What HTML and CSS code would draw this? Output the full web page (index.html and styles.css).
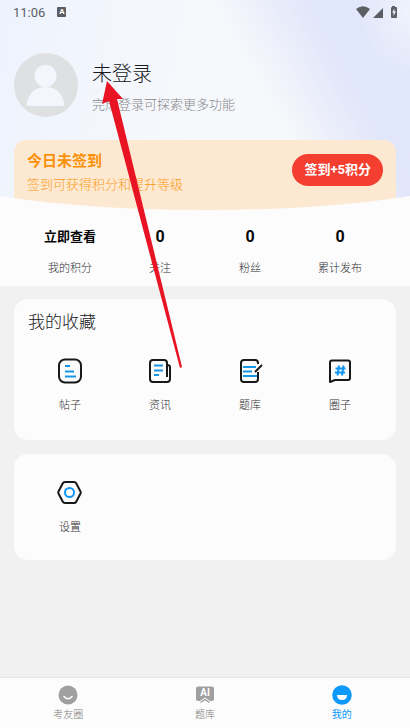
FILE: index.html
```html
<!DOCTYPE html>
<html lang="zh-CN">
<head>
<meta charset="utf-8">
<meta name="viewport" content="width=device-width, initial-scale=1">
<title>我的</title>
<link rel="stylesheet" href="styles.css">
</head>
<body>
<div class="app">
  <header class="hero">
    <div class="status">
      <span class="time">11:06</span>
      <span class="badge">A</span>
      <svg class="signals" width="42" height="14" viewBox="0 0 42 14" fill="#5c5e63" aria-hidden="true">
        <path d="M0 4Q7-1.500 14 4L7 13Z"/>
        <path d="M17 13L27 3V13Z"/>
        <path fill-rule="evenodd" d="M36 1h3v1h1q1 0 1 1v9q0 1-1 1h-4q-1 0-1-1V3q0-1 1-1ZM38.500 3.500L36 7.500h1.500V11L40 6.500h-1.500Z"/>
      </svg>
    </div>
    <a class="profile" href="#login">
      <svg class="avatar" width="64" height="64" viewBox="0 0 64 64" aria-hidden="true">
        <circle cx="32" cy="32" r="32" fill="#dfe0e1"/>
        <circle cx="31.500" cy="23" r="11" fill="#f3f6fd"/>
        <path d="M12.500 51Q13 53 15 53H48Q50 53 50.500 51C48 39 41 34 31.500 34S15 39 12.500 51Z" fill="#f3f6fd"/>
      </svg>
      <span class="who">
        <span class="name">未登录</span>
        <span class="hint">完成登录可探索更多功能</span>
      </span>
    </a>
    <section class="checkin">
      <div class="checkin-text">
        <h2>今日未签到</h2>
        <p>签到可获得积分和提升等级</p>
      </div>
      <button class="checkin-btn" type="button">签到+5积分</button>
    </section>
    <svg class="curve" viewBox="0 0 410 15" preserveAspectRatio="none" aria-hidden="true"><path d="M0 0C65 10 130 14 205 14S345 10 410 0V15H0Z" fill="#fcfcfc"/></svg>
  </header>

  <section class="stats">
    <a class="stat" href="#points"><b class="view">立即查看</b><span>我的积分</span></a>
    <a class="stat" href="#following"><b>0</b><span>关注</span></a>
    <a class="stat" href="#fans"><b>0</b><span>粉丝</span></a>
    <a class="stat" href="#posts"><b>0</b><span>累计发布</span></a>
  </section>

  <main class="cards">
    <section class="card">
      <h2 class="card-title">我的收藏</h2>
      <div class="grid">
        <a class="item" href="#threads">
          <svg width="26" height="26" viewBox="0 0 26 26" fill="none" stroke-width="2" aria-hidden="true">
            <rect x="2" y="1.500" width="22" height="23" rx="6" stroke="#17181a"/>
            <path d="M8 8h5M8 13.500h9M8 18.500h11" stroke="#1296e5"/>
          </svg>
          <span>帖子</span>
        </a>
        <a class="item" href="#news">
          <svg width="26" height="26" viewBox="0 0 26 26" fill="none" stroke-width="2" aria-hidden="true">
            <path d="M20 19V5Q20 2 17 2H6Q3 2 3 5V21Q3 24 6 24H20Q23 24 23 21V9Q23 7 20 7" stroke="#17181a"/>
            <path d="M7 7.500h9M7 12.500h9M7 17h5" stroke="#1296e5"/>
          </svg>
          <span>资讯</span>
        </a>
        <a class="item" href="#questions">
          <svg width="26" height="26" viewBox="0 0 26 26" fill="none" stroke-width="2" aria-hidden="true">
            <path d="M21 6V5Q21 2 18 2H7Q4 2 4 5V21Q4 24 7 24H18Q21 24 21 21V14" stroke="#17181a"/>
            <path d="M6 9h13M6 13.500h9M6 18h14" stroke="#1296e5"/>
            <path d="M18 14L25 7" stroke="#17181a"/>
          </svg>
          <span>题库</span>
        </a>
        <a class="item" href="#circles">
          <svg width="26" height="26" viewBox="0 0 26 26" fill="none" stroke-width="2" stroke-linejoin="round" aria-hidden="true">
            <path d="M5 2.500H21Q23 2.500 23 4.500V20Q23 22 21 22H8L3 24V4.500Q3 2.500 5 2.500Z" stroke="#17181a"/>
            <path d="M12 7.500L10.500 17.500M16.500 7.500L15 17.500M8.500 10.500H18.500M8 14.500H18" stroke="#1296f5"/>
          </svg>
          <span>圈子</span>
        </a>
      </div>
    </section>
    <section class="card card-short">
      <div class="grid">
        <a class="item" href="#settings">
          <svg width="26" height="26" viewBox="0 0 26 26" fill="none" stroke-width="2" stroke-linejoin="round" aria-hidden="true">
            <path d="M8 2H17Q18.500 2 19.200 3.300L23.500 11.500Q24 12.500 23.500 13.500L19.200 21.700Q18.500 23 17 23H8Q6.500 23 5.800 21.700L1.500 13.500Q1 12.500 1.500 11.500L5.800 3.300Q6.500 2 8 2Z" stroke="#17181a"/>
            <circle cx="12.500" cy="12.500" r="4.500" stroke="#1296f5"/>
          </svg>
          <span>设置</span>
        </a>
      </div>
    </section>
  </main>

  <nav class="tabs">
    <a class="tab" href="#community">
      <svg width="20" height="20" viewBox="0 0 20 20" aria-hidden="true">
        <circle cx="10" cy="10" r="9.500" fill="#a0a0a0"/>
        <path d="M6 11.500Q10 16 14 11.500" fill="none" stroke="#fff" stroke-width="1.500" stroke-linecap="round"/>
      </svg>
      <span>考友圈</span>
    </a>
    <a class="tab" href="#bank">
      <svg width="20" height="20" viewBox="0 0 20 20" aria-hidden="true">
        <path d="M3 1.500H17Q19 1.500 19 3.500V14Q19 16 17 16H15L10 12.500L5 16H3Q1 16 1 14V3.500Q1 1.500 3 1.500Z" fill="#a0a0a0"/>
        <path d="M5.500 17.500L10 14.500L14.500 17.500" fill="none" stroke="#a0a0a0" stroke-width="1.500"/>
        <text class="ai" x="10" y="11" text-anchor="middle">AI</text>
      </svg>
      <span>题库</span>
    </a>
    <a class="tab active" href="#me" aria-current="page">
      <svg width="20" height="20" viewBox="0 0 20 20" aria-hidden="true">
        <circle cx="10" cy="10" r="9.750" fill="#0d98fb"/>
        <path d="M5 10H15Q15 15 10 15T5 10Z" fill="#fff"/>
      </svg>
      <span>我的</span>
    </a>
  </nav>

  <svg class="pointer" width="82" height="288" viewBox="0 0 82 288" aria-hidden="true"><path d="M6 1L1 24L8 21L79 288L81 287L16 19L22 19Z" fill="#e81424"/></svg>
</div>
</body>
</html>
```
FILE: styles.css
```css
* { box-sizing: border-box; }
body, h2, p { margin: 0; }
body {
  background: #f1f1f1;
  color: #17181a;
  font-family: Roboto, "Noto Sans CJK SC", sans-serif;
  font-size: 11px;
  font-weight: 300;
}
a { color: inherit; text-decoration: none; }
svg { display: block; flex: none; }

.app {
  position: relative;
  min-height: 100vh;
  display: flex;
  flex-direction: column;
}

.hero {
  background:
    radial-gradient(ellipse 50px 60px at 100% 6%, #eff3fc, transparent),
    linear-gradient(62deg, transparent 62%, #e1e6fa 80%, #e2e8fb 100%),
    linear-gradient(100deg, #edf3fe 0%, #f5f7fc 35%, #f8f9fb 70%);
}
.status {
  display: flex;
  align-items: center;
  height: 24px;
  padding: 0 12px 0 13px;
  color: #5c5e63;
}
.time { font-size: 13px; font-weight: 400; }
.badge {
  margin-left: 12px;
  width: 9px;
  height: 10px;
  border-radius: 1px;
  background: #5c5e63;
  color: #fff;
  font-size: 8px;
  font-weight: 700;
  line-height: 10px;
  text-align: center;
}
.signals { margin-left: auto; }

.profile {
  display: flex;
  align-items: center;
  gap: 14px;
  padding: 29px 14px 0;
}
.who { display: flex; flex-direction: column; gap: 6px; padding-top: 3px; }
.name { font-size: 20px; line-height: 30px; }
.hint { color: #85878b; font-size: 13px; line-height: 20px; }

.checkin {
  display: flex;
  justify-content: space-between;
  margin: 23px 14px 0;
  padding: 11px 13px 0;
  height: 70px;
  border-radius: 12px 12px 0 0;
  background: #fde9d1;
}
.checkin h2 {
  color: #fa9008;
  font-size: 15px;
  font-weight: 700;
  line-height: 20px;
}
.checkin p {
  margin-top: 4px;
  color: #fa9a18;
  font-size: 13px;
  line-height: 20px;
}
.checkin-btn {
  margin-top: 3px;
  height: 32px;
  padding: 0 12px;
  border: 0;
  border-radius: 16px;
  background: #f43e30;
  color: #fff;
  font: 700 13px/20px Roboto, "Noto Sans CJK SC", sans-serif;
}
.curve {
  position: relative;
  width: 100%;
  height: 15px;
  margin-top: -14px;
}

.stats {
  display: grid;
  grid-template-columns: repeat(4, 1fr);
  padding: 15px 25px 9px;
  background: #fcfcfc;
}
.stat {
  display: flex;
  flex-direction: column;
  align-items: center;
  gap: 13px;
  color: #303032;
  line-height: 16px;
}
.stat b { color: #080808; font-size: 16px; font-weight: 700; line-height: 22px; }
.stat .view { font-size: 13px; }

.cards {
  display: flex;
  flex: 1;
  flex-direction: column;
  gap: 14px;
  padding: 13px 14px;
}
.card {
  padding: 11px 11px 26px;
  border-radius: 14px;
  background: #fcfcfc;
}
.card-title {
  margin: 0 3px 24px;
  font-size: 17px;
  font-weight: 300;
  line-height: 24px;
}
.card-short { padding-top: 26px; padding-bottom: 24px; }
.grid { display: grid; grid-template-columns: repeat(4, 1fr); }
.item {
  display: flex;
  flex-direction: column;
  align-items: center;
  gap: 14px;
  color: #303032;
  line-height: 16px;
}

.tabs {
  display: grid;
  grid-template-columns: repeat(3, 1fr);
  padding: 7px 0 5px;
  border-top: 1px solid #e8e8e8;
  background: #fcfcfc;
}
.tab {
  display: flex;
  flex-direction: column;
  align-items: center;
  gap: 2px;
  color: #808080;
  font-size: 10px;
  line-height: 16px;
}
.tab.active { color: #0d98fb; font-weight: 400; }
.ai { fill: #fff; font: 700 10px Roboto, sans-serif; }

.pointer {
  position: absolute;
  top: 80px;
  left: 101px;
  pointer-events: none;
}
```
